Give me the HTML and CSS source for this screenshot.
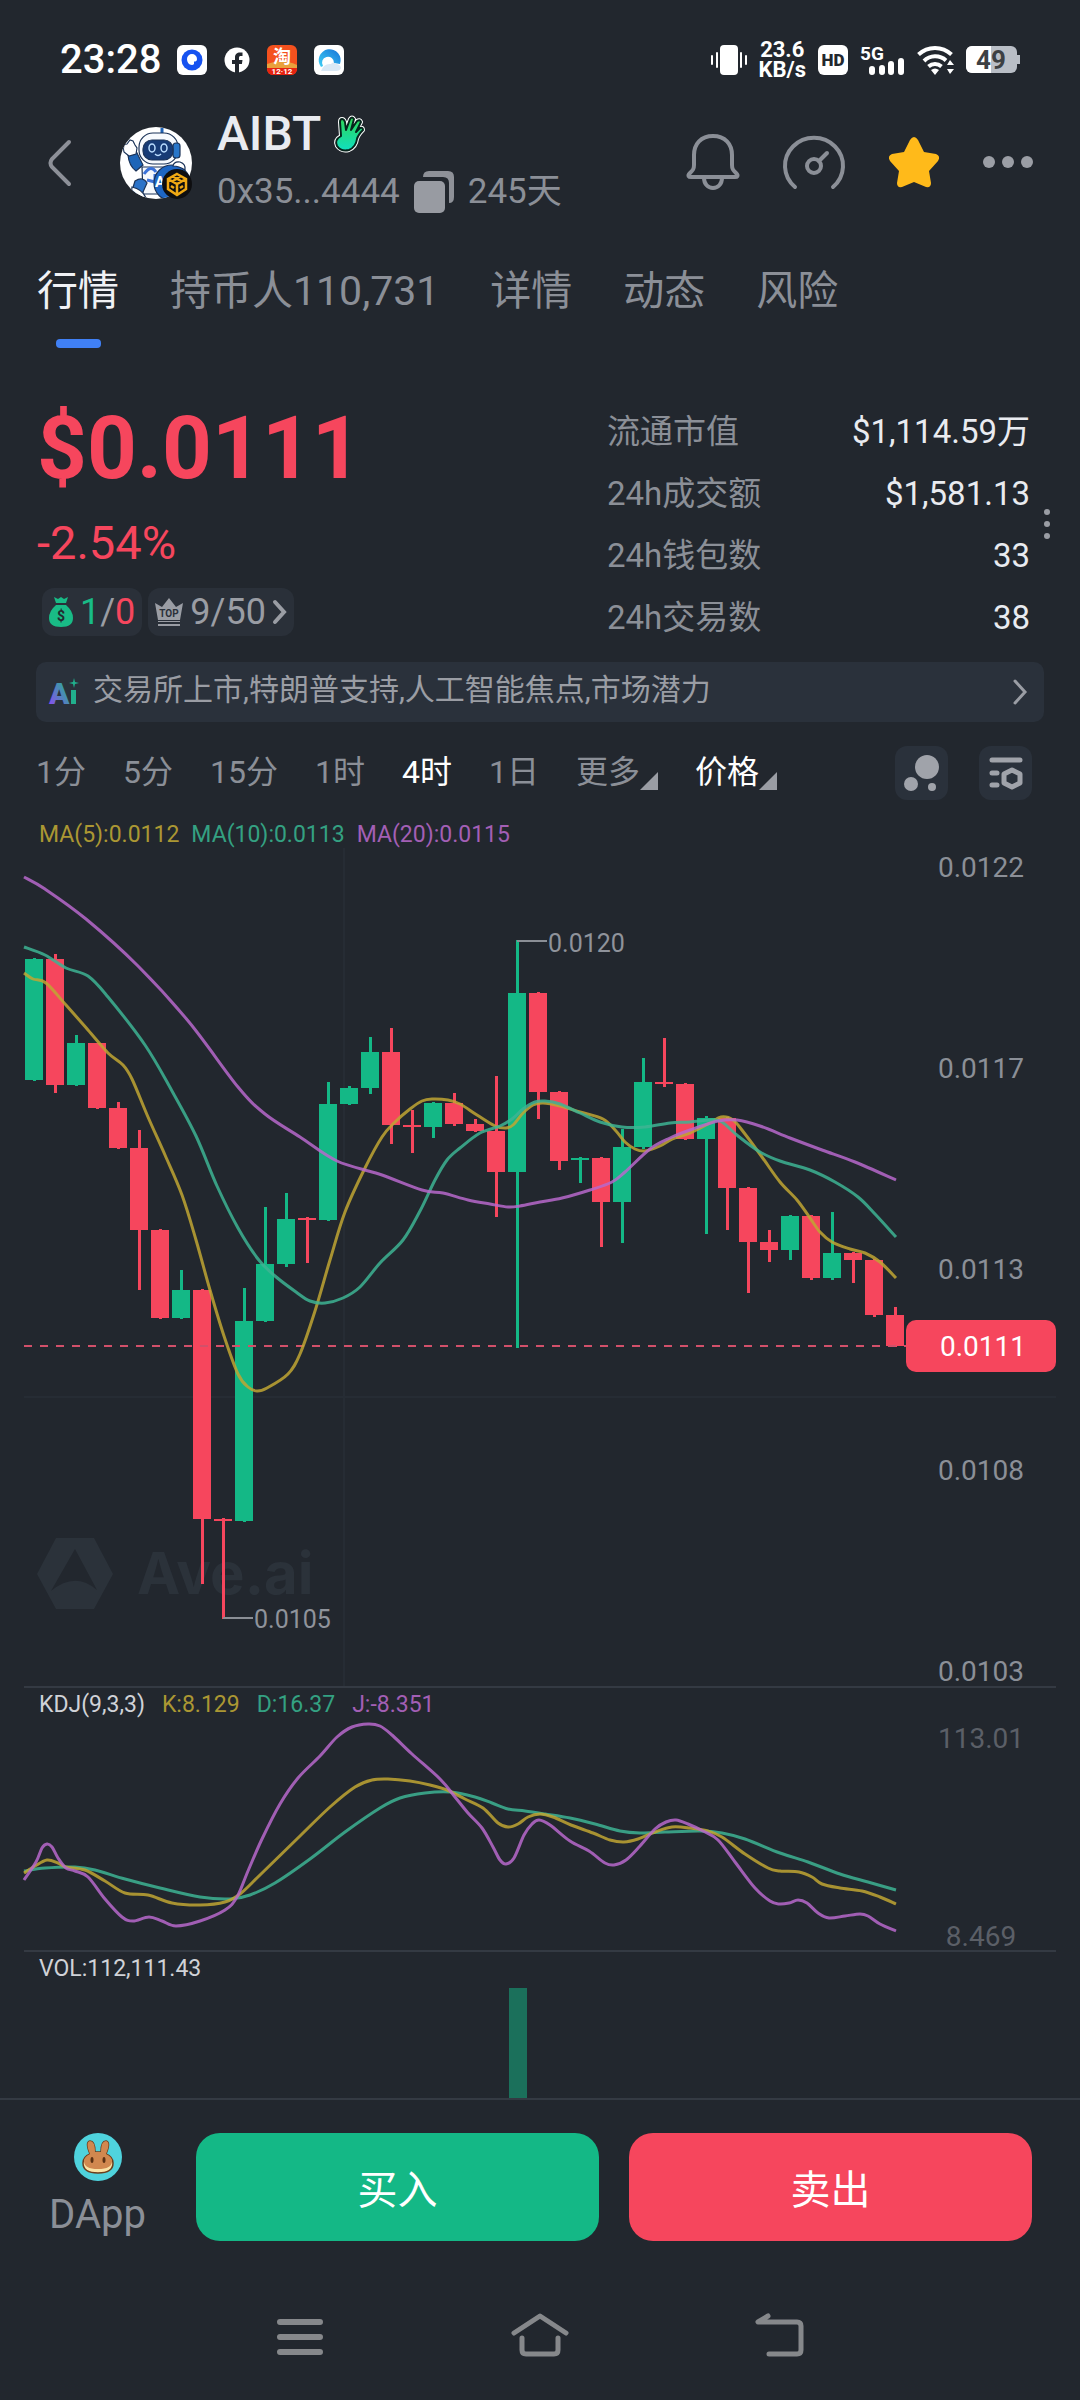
FILE: index.html
```html
<!DOCTYPE html>
<html lang="zh-CN">
<head>
    <meta charset="UTF-8">
    <meta name="viewport" content="width=device-width, initial-scale=1.0">
    <title>AIBT 行情</title>
    <link rel="stylesheet" href="styles.css">
</head>
<body>
    <!-- 状态栏 -->
    <div class="status-bar">
        <span class="clock">23:28</span>
        <div class="app-icons">
            <svg width="30" height="30" viewBox="0 0 30 30">
                <rect width="30" height="30" rx="6" fill="#fff"/>
                <circle cx="15" cy="15" r="10.500" fill="#1652f0"/>
                <path d="M10 14a5 5 0 0 1 10 0c0 2-1 2.500-3 2.500V19a2.500 2.500 0 0 1-2 1c-3 0-5-3-5-6z" fill="#fff"/>
            </svg>
            <svg width="26" height="26" viewBox="0 0 26 26">
                <circle cx="13" cy="13" r="12.500" fill="#fff"/>
                <path d="M11 26v-9H8v-4h3v-2.500C11 7 13 5.500 16 5.500h2.500V9H17c-1.500 0-2 .6-2 2v2h3.500l-.6 4H15v9z" fill="#22272e"/>
            </svg>
            <svg width="30" height="30" viewBox="0 0 30 30">
                <rect width="30" height="30" rx="6" fill="#f4511e"/>
                <path d="M0 19q15-6 30 1v5H0z" fill="#e9a13c"/>
                <path d="M0 23h30v1a6 6 0 0 1-6 6H6a6 6 0 0 1-6-6z" fill="#e62310"/>
                <text x="15" y="18" class="taobao-text">淘</text>
                <text x="15" y="29" class="taobao-date">12·12</text>
            </svg>
            <svg width="30" height="30" viewBox="0 0 30 30">
                <defs>
                    <linearGradient id="browser" x1="0" y1="1" x2="1" y2="0">
                        <stop offset="0" stop-color="#3fd0f5"/>
                        <stop offset="1" stop-color="#1673d8"/>
                    </linearGradient>
                </defs>
                <rect width="30" height="30" rx="6" fill="#fff"/>
                <path d="M7 22A11 11 0 1 1 26 19L20 18a6 6 0 1 0-11 3z" fill="url(#browser)"/>
                <path d="M7 26q3-8 10-7 2-3 5 0 4 0 5 4-1 3-5 3z" fill="#d9e8f5"/>
            </svg>
        </div>

        <svg width="36" height="30" viewBox="0 0 36 30">
            <rect x="9" width="18" height="30" rx="4" fill="#fff"/>
            <path d="M1 11v8M6 8v14M30 8v14M35 11v8" stroke="#fff" stroke-width="2" stroke-linecap="round"/>
        </svg>
        <span class="speed">23.6<br>KB/s</span>
        <svg width="30" height="30" viewBox="0 0 30 30">
            <rect width="30" height="30" rx="6" fill="#fff"/>
            <text x="15" y="21" class="hd-text">HD</text>
        </svg>
        <svg width="45" height="32" viewBox="0 0 45 32">
            <text x="0" y="16" class="net-text">5G</text>
            <path d="M12 25v3M22 24v4M31 20v8M41 17v11" stroke="#fff" stroke-width="6" stroke-linecap="round"/>
        </svg>
        <svg width="37" height="30" viewBox="0 0 37 30">
            <path d="M1.500 9.500a24 24 0 0 1 33 0M7 16a16 16 0 0 1 22-.5M11.500 21.500a10 10 0 0 1 13 0" fill="none" stroke="#fff" stroke-width="4"/>
            <path d="M14 25q4-3 8 0l-4 5zM33 15l4 5h-7zM33 29l4-5h-7z" fill="#fff"/>
        </svg>
        <svg width="54" height="28" viewBox="0 0 54 28">
            <rect width="51" height="27" rx="6" fill="#b9bec6"/>
            <path d="M6 0h19v27H6a6 6 0 0 1-6-6V6a6 6 0 0 1 6-6z" fill="#fff"/>
            <path d="M51 9h3v9h-3z" fill="#b9bec6"/>
            <text x="25" y="23" class="battery-text">49</text>
        </svg>
    </div>

    <!-- 代币信息 -->
    <header class="token-header">
        <button class="icon-btn back" aria-label="返回">
            <svg width="24" height="46" viewBox="0 0 24 46"><path d="M21 2L4 19q-3 4 0 8l17 17" fill="none" stroke="#8d9098" stroke-width="4" stroke-linecap="round"/></svg>
        </button>
        <svg class="avatar" width="74" height="74" viewBox="0 0 74 74">
            <defs><clipPath id="round"><circle cx="37" cy="37" r="36"/></clipPath></defs>
            <circle cx="37" cy="37" r="36" fill="#fff"/>
            <g clip-path="url(#round)" stroke="#1b3358" stroke-width="1.200">
                <path d="M43 2v6" stroke-width="3" stroke="#1f62b5"/>
                <path d="M23 41h32v20l-10 7H24z" fill="#f5f8fc"/>
                <path d="M9 29l8-4 7 14-7 6q-7-5-8-16z" fill="#1d65b8"/>
                <path d="M5 26q-2-8 3-8l3-4 3 1 2 4 2 3-1 6-7 2z" fill="#fff"/>
                <path d="M16 55q8-5 12 2l-4 9-12 2z" fill="#2a72c8"/>
                <path d="M13 61q10 2 14 11H12z" fill="#fff"/>
                <rect x="20" y="7" width="39" height="31" rx="14" fill="#f7fafe"/>
                <rect x="54" y="17" width="7" height="15" rx="3" fill="#2876c9"/>
                <rect x="24" y="14" width="30" height="20" rx="9" fill="#173b76"/>
                <ellipse cx="33" cy="22" rx="3" ry="4" fill="none" stroke="#b9dcff" stroke-width="1.500"/>
                <ellipse cx="45" cy="22" rx="3" ry="4" fill="none" stroke="#b9dcff" stroke-width="1.500"/>
                <path d="M36 28q3 3 6 0" fill="none" stroke="#b9dcff" stroke-width="1.500"/>
                <path d="M25 48q7-10 12-2M28 54l8 2v-8" fill="none" stroke="#3a72d9" stroke-width="3"/>
                <circle cx="53" cy="57" r="18" fill="#1e66c4"/>
                <path d="M54 40q1-5 7-4 6 2 5 8-6-4-12-4z" fill="#fff"/>
            </g>
            <text x="36" y="61" class="avatar-letter">A</text>
            <circle cx="58" cy="58" r="15" fill="#0e0e10"/>
            <path d="M58 48l9 5v10l-9 6-9-6V53zM49 53l9 5 9-5M58 58v11M53 50l9 5M62 50l-8 5M52 60l3 2M64 60l-3 2" fill="none" stroke="#f0a914" stroke-width="2.500"/>
        </svg>
        <div class="token-info">
            <div class="token-name">
                <h1>AIBT</h1>
                <svg width="32" height="36" viewBox="0 0 32 36">
                    <defs>
                        <linearGradient id="hand" x1="0" y1="0" x2="0" y2="1">
                            <stop offset="0" stop-color="#2ed656"/>
                            <stop offset="1" stop-color="#10dfc0"/>
                        </linearGradient>
                    </defs>
                    <path d="M8 20L7 6q0-3 2-3t3 3l1 8 4-11q2-3 4 0l-3 11 6-9q3-2 4 1l-5 10 4-4q3-1 3 2-5 5-6 9-1 8-8 11-8 2-12-4-3-6 4-10z" fill="none" stroke="#fff" stroke-width="4" stroke-linejoin="round"/>
                    <path d="M8 20L7 6q0-3 2-3t3 3l1 8 4-11q2-3 4 0l-3 11 6-9q3-2 4 1l-5 10 4-4q3-1 3 2-5 5-6 9-1 8-8 11-8 2-12-4-3-6 4-10z" fill="url(#hand)" stroke="#06251c" stroke-width="2" stroke-linejoin="round"/>
                </svg>
            </div>
            <div class="token-sub">
                <span>0x35...4444</span>
                <button class="icon-btn" aria-label="复制">
                    <svg width="40" height="42" viewBox="0 0 40 42">
                        <path d="M9 6q0-6 6-6h19q6 0 6 6v20q0 6-5 6V12q0-6-6-6z" fill="#8e9198"/>
                        <rect y="10" width="31" height="32" rx="5" fill="#989ba2"/>
                    </svg>
                </button>
                <span>245天</span>
            </div>
        </div>
        <div class="header-actions">
            <button class="icon-btn" aria-label="提醒">
                <svg width="54" height="56" viewBox="0 0 54 56" fill="none" stroke="#8b8f97" stroke-width="4" stroke-linejoin="round">
                    <path d="M27 2c12 0 19 8 19 19v10c0 4 1 5 4 8s1 4-1 4H5c-2 0-4-1-1-4s4-4 4-8V21C8 10 15 2 27 2z"/>
                    <path d="M18 44c0 6 4 10 9 10s9-4 9-10"/>
                </svg>
            </button>
            <button class="icon-btn" aria-label="检测">
                <svg width="62" height="56" viewBox="0 0 62 56" fill="none" stroke="#8b8f97" stroke-width="4" stroke-linecap="round">
                    <path d="M12 53a29 28 0 1 1 38 0"/>
                    <circle cx="31" cy="32" r="7"/>
                    <path d="M36 27l8-8"/>
                </svg>
            </button>
            <button class="icon-btn" aria-label="收藏">
                <svg width="52" height="52" viewBox="0 0 52 52"><path d="M22 4q4-6 8 0l6 12 12 2q5 2 2 7l-9 10 2 12q0 5-5 4l-12-5-12 5q-5 1-5-4l2-12L2 25q-3-5 2-7l12-2z" fill="#ffba1a"/></svg>
            </button>
            <button class="icon-btn" aria-label="更多">
                <svg width="50" height="12" viewBox="0 0 50 12" fill="#9b9ea5"><circle cx="6" cy="6" r="6"/><circle cx="25" cy="6" r="6"/><circle cx="44" cy="6" r="6"/></svg>
            </button>
        </div>
    </header>

    <nav class="tabs">
        <a href="#" class="active">行情</a>
        <a href="#">持币人110,731</a>
        <a href="#">详情</a>
        <a href="#">动态</a>
        <a href="#">风险</a>
    </nav>

    <!-- 价格 -->
    <section class="quote">
        <div class="quote-left">
            <div class="price">$0.0111</div>
            <div class="change">-2.54%</div>
            <div class="tags">
                <button class="tag">
                    <svg width="24" height="30" viewBox="0 0 24 30">
                        <path d="M5 0l4 2 3-2 3 2 4-2-2 6H7zM7 8h10q7 6 7 13 0 9-12 9T0 21q0-7 7-13z" fill="#19bb86"/>
                        <text x="12" y="24" class="bag-text">$</text>
                    </svg>
                    <span><span class="up">1</span>/<span class="down">0</span></span>
                </button>
                <button class="tag">
                    <svg width="28" height="28" viewBox="0 0 28 28">
                        <path d="M0 5l7 4 7-9 7 9 7-4-3 17H3zM3 23h22v1H3zM3 26h22v2H3z" fill="#9a9da4"/>
                        <text x="14" y="19" class="top-text">TOP</text>
                    </svg>
                    <span>9/50</span>
                    <svg width="14" height="24" viewBox="0 0 14 24"><path d="M2 2l9 10-9 10" fill="none" stroke="#9a9da4" stroke-width="4" stroke-linecap="round"/></svg>
                </button>
            </div>
        </div>
        <dl class="stats">
            <div><dt>流通市值</dt><dd>$1,114.59万</dd></div>
            <div><dt>24h成交额</dt><dd>$1,581.13</dd></div>
            <div><dt>24h钱包数</dt><dd>33</dd></div>
            <div><dt>24h交易数</dt><dd>38</dd></div>
        </dl>
        <svg class="grip" width="6" height="30" viewBox="0 0 6 30" fill="#9a9da4"><circle cx="3" cy="3" r="3"/><circle cx="3" cy="15" r="3"/><circle cx="3" cy="27" r="3"/></svg>
    </section>

    <a href="#" class="ai-bar">
        <svg width="30" height="28" viewBox="0 0 30 28">
            <defs>
                <linearGradient id="ai" x1="0" y1="1" x2="1" y2="0">
                    <stop offset="0.100" stop-color="#8a4df0"/>
                    <stop offset="0.900" stop-color="#1fb58c"/>
                </linearGradient>
            </defs>
            <text x="0" y="26" class="ai-text" fill="url(#ai)">A</text>
            <rect x="22" y="12" width="5" height="14" fill="#21b08d"/>
            <path d="M25 0l1 4 4 1-4 1-1 4-1-4-4-1 4-1z" fill="#21b08d"/>
        </svg>
        <span class="ai-desc">交易所上市,特朗普支持,人工智能焦点,市场潜力</span>
        <svg width="16" height="26" viewBox="0 0 16 26"><path d="M3 2l10 11L3 24" fill="none" stroke="#9a9da4" stroke-width="3" stroke-linecap="round"/></svg>
    </a>

    <!-- 周期 -->
    <div class="intervals">
        <button>1分</button>
        <button>5分</button>
        <button>15分</button>
        <button>1时</button>
        <button class="active">4时</button>
        <button>1日</button>
        <button class="menu">更多</button>
        <button class="menu active">价格</button>
        <div class="chart-tools">
            <button class="square" aria-label="气泡图">
                <svg width="36" height="36" viewBox="0 0 36 36" fill="#a0a3aa"><circle cx="23" cy="12" r="12"/><circle cx="7" cy="29" r="7"/><circle cx="28" cy="32" r="4"/></svg>
            </button>
            <button class="square" aria-label="指标设置">
                <svg width="34" height="32" viewBox="0 0 34 32">
                    <path d="M3 3h28M3 16h5M3 28h5" stroke="#a0a3aa" stroke-width="5" stroke-linecap="round"/>
                    <path d="M23 13l8 4v9l-8 4-8-4v-9z" fill="none" stroke="#a0a3aa" stroke-width="5" stroke-linejoin="round"/>
                </svg>
            </button>
        </div>
    </div>

    <!-- K线图 -->
    <main class="charts">
        <section class="pane">
            <div class="legend ma"><span class="c1">MA(5):0.0112</span><span class="c2">MA(10):0.0113</span><span class="c3">MA(20):0.0115</span></div>
            <svg viewBox="24 848 1032 838">
                <path d="M344 848V1686M24 1397H1056" class="grid"/>
                <path d="M56 1538h38l19 36-19 35H56l-19-35zM75 1549l-24 42q24-20 46-1z" fill="#2b323a" fill-rule="evenodd"/>
                <text x="137" y="1594" class="watermark">Ave.ai</text>
                <g id="candles"></g>
                <path d="M24 1346H907" class="last-line"/>
                <g id="ma"></g>
                <path d="M517 941h30M223 1618h30" stroke="#8a8e95" stroke-width="2"/>
                <text x="548" y="952" class="mark">0.0120</text>
                <text x="254" y="1628" class="mark">0.0105</text>
                <g class="axis">
                    <text x="981" y="877">0.0122</text>
                    <text x="981" y="1078">0.0117</text>
                    <text x="981" y="1279">0.0113</text>
                    <text x="981" y="1480">0.0108</text>
                    <text x="981" y="1681">0.0103</text>
                </g>
                <rect x="906" y="1320" width="150" height="52" rx="10" fill="#f6465d"/>
                <text x="983" y="1356" class="last-price">0.0111</text>
            </svg>
        </section>
        <section class="pane">
            <div class="legend"><span>KDJ(9,3,3)</span><span class="c1">K:8.129</span><span class="c2">D:16.37</span><span class="c3">J:-8.351</span></div>
            <svg viewBox="24 1720 1032 230">
                <g id="kdj"></g>
                <g class="axis dim">
                    <text x="981" y="1748">113.01</text>
                    <text x="981" y="1946">8.469</text>
                </g>
            </svg>
        </section>
        <section class="pane volume">
            <div class="legend"><span>VOL:112,111.43</span></div>
            <svg viewBox="24 1984 1032 114">
                <rect x="509" y="1988" width="18" height="110" fill="#1b705b"/>
            </svg>
        </section>
    </main>

    <footer class="trade-bar">
        <a href="#" class="dapp">
            <svg width="48" height="48" viewBox="0 0 48 48">
                <circle cx="24" cy="24" r="24" fill="#4fd3dd"/>
                <path d="M16 21q-5-12 0-13 5 0 5 11h6q0-11 5-11 5 1 0 13 7 3 7 9 0 10-15 10T9 30q0-6 7-9z" fill="#fbe3a5" stroke="#6b3d1c" stroke-width="1.500"/>
                <path d="M16 21q-5-12 0-13 5 0 5 11h6q0-11 5-11 5 1 0 13 6 3 6 7 0 8-14 8T10 28q0-4 6-7z" fill="#d1884f"/>
                <ellipse cx="18" cy="27" rx="1.500" ry="3" fill="#5b3113"/>
                <ellipse cx="30" cy="27" rx="1.500" ry="3" fill="#5b3113"/>
            </svg>
            <span>DApp</span>
        </a>
        <button class="buy">买入</button>
        <button class="sell">卖出</button>
    </footer>

    <div class="system-nav">
        <button class="icon-btn" aria-label="最近任务">
            <svg width="58" height="48" viewBox="0 0 58 48"><path d="M9 9h40M9 24h40M9 39h40" stroke="#86888b" stroke-width="6" stroke-linecap="round"/></svg>
        </button>
        <button class="icon-btn" aria-label="主页">
            <svg width="58" height="48" viewBox="0 0 58 48" fill="none" stroke="#86888b" stroke-width="5" stroke-linecap="round" stroke-linejoin="round"><path d="M3 20L29 3l26 17M11 25v12q0 4 4 4h28q4 0 4-4V25"/></svg>
        </button>
        <button class="icon-btn" aria-label="返回上一页">
            <svg width="58" height="48" viewBox="0 0 58 48" fill="none" stroke="#86888b" stroke-width="5" stroke-linecap="round" stroke-linejoin="round"><path d="M17 3L7 9h39q4 0 4 4v24q0 4-4 4H18"/></svg>
        </button>
    </div>

    <script src="chart.js"></script>
</body>
</html>
```

FILE: styles.css
```css
* {
    box-sizing: border-box;
}

body {
    margin: 0;
    background-color: #22272e;
    color: #e9ebf0;
    font-family: Roboto, "Noto Sans CJK SC", sans-serif;
    font-size: 32px;
}

svg {
    display: block;
    flex-shrink: 0;
    overflow: visible;
}

button {
    margin: 0;
    padding: 0;
    border: none;
    background: none;
    color: inherit;
    font: inherit;
    cursor: pointer;
}

a {
    color: inherit;
    text-decoration: none;
}

text {
    font-family: Roboto, "Noto Sans CJK SC", sans-serif;
}

/* 状态栏 */
.status-bar {
    display: flex;
    align-items: center;
    gap: 12px;
    height: 80px;
    padding: 40px 60px 0;
    color: #fff;
}

.clock {
    font-size: 40px;
    font-weight: 500;
    line-height: 40px;
}

.app-icons {
    display: flex;
    align-items: center;
    gap: 17px;
    margin: 0 auto 0 4px;
}

.speed {
    font-size: 22px;
    font-weight: 700;
    line-height: 20px;
    text-align: center;
}

.taobao-text {
    font-size: 18px;
    font-weight: 700;
    fill: #fff;
    text-anchor: middle;
}

.taobao-date {
    font-size: 8px;
    font-weight: 700;
    fill: #fff;
    text-anchor: middle;
}

.hd-text {
    font-size: 17px;
    font-weight: 900;
    fill: #22272e;
    text-anchor: middle;
}

.net-text {
    font-size: 19px;
    font-weight: 700;
    fill: #fff;
}

.battery-text {
    font-size: 26px;
    font-weight: 700;
    fill: #3d4043;
    text-anchor: middle;
}

/* 头部 */
.token-header {
    display: flex;
    align-items: center;
    padding: 28px 48px 0;
}

.icon-btn {
    display: flex;
    align-items: center;
    justify-content: center;
}

.avatar {
    margin: 0 24px 0 47px;
}

.avatar-letter {
    font-size: 15px;
    font-weight: 700;
    fill: #fff;
}

.token-name {
    display: flex;
    align-items: center;
    gap: 12px;
    height: 52px;
}

.token-name h1 {
    margin: 0;
    font-size: 48px;
    font-weight: 500;
    line-height: 52px;
}

.token-sub {
    display: flex;
    align-items: center;
    gap: 14px;
    height: 52px;
    margin-top: 6px;
    color: #8b8f97;
    font-size: 35px;
    line-height: 52px;
}

.header-actions {
    display: flex;
    align-items: center;
    gap: 43px;
    margin: -2px -1px 0 auto;
}

/* 标签 */
.tabs {
    display: flex;
    gap: 51px;
    padding: 45px 37px 0;
    color: #8b8f97;
    font-size: 41px;
    line-height: 56px;
}

.tabs a::after {
    content: "";
    display: block;
    width: 45px;
    height: 9px;
    margin: 20px auto 0;
    border-radius: 4px;
}

.tabs .active {
    color: #f0f1f5;
}

.tabs .active::after {
    background-color: #4080f5;
}

/* 价格 */
.quote {
    display: flex;
    align-items: center;
    padding: 53px 30px 0 37px;
}

.quote-left {
    flex: 1;
    padding-bottom: 12px;
}

.price {
    color: #f6465d;
    font-size: 87px;
    font-weight: 700;
    line-height: 92px;
}

.change {
    margin-top: 20px;
    color: #f6465d;
    font-size: 47px;
    line-height: 58px;
}

.tags {
    display: flex;
    gap: 6px;
    margin-top: 16px;
    padding-left: 5px;
}

.tag {
    display: flex;
    align-items: center;
    gap: 7px;
    height: 48px;
    padding: 0 7px;
    border-radius: 12px;
    background-color: #2a3039;
    color: #9a9da4;
    font-size: 36px;
}

.up {
    color: #19bb86;
}

.down {
    color: #f6465d;
}

.bag-text {
    font-size: 14px;
    font-weight: 700;
    fill: #22272e;
    text-anchor: middle;
}

.top-text {
    font-size: 10px;
    font-weight: 700;
    fill: #2a3039;
    text-anchor: middle;
}

.stats {
    width: 423px;
    margin: 0;
}

.stats div {
    display: flex;
    justify-content: space-between;
    font-size: 33px;
    line-height: 62px;
}

.stats dt {
    color: #8b8f97;
}

.stats dd {
    margin: 0;
}

.grip {
    margin: 0 0 2px 14px;
}

/* AI 简介 */
.ai-bar {
    display: flex;
    align-items: center;
    gap: 14px;
    height: 60px;
    margin: 13px 36px 0;
    padding: 0 16px 0 13px;
    border-radius: 10px;
    background-color: #2a313b;
    color: #9a9da4;
}

.ai-desc {
    flex: 1;
    font-size: 30px;
    line-height: 56px;
    padding-bottom: 4px;
}

.ai-text {
    font-size: 30px;
    font-weight: 900;
}

/* 周期 */
.intervals {
    display: flex;
    align-items: center;
    gap: 37px;
    height: 54px;
    margin-top: 24px;
    padding: 0 48px 0 36px;
    color: #8b8f97;
    line-height: 50px;
}

.intervals > button {
    padding-bottom: 2px;
}

.intervals .active {
    color: #fff;
}

.menu {
    display: flex;
    align-items: flex-end;
}

.menu::after {
    content: "";
    width: 18px;
    height: 18px;
    margin-bottom: 7px;
    background-color: #9a9da4;
    clip-path: polygon(100% 0, 100% 100%, 0 100%);
}

.chart-tools {
    display: flex;
    gap: 31px;
    margin-left: auto;
}

.square {
    display: flex;
    align-items: center;
    justify-content: center;
    width: 53px;
    height: 54px;
    border-radius: 12px;
    background-color: #2a313b;
}

/* 图表 */
.charts {
    padding: 20px 24px 0;
}

.pane {
    border-bottom: 2px solid #343a43;
}

.pane.volume {
    border-bottom: none;
}

.pane svg {
    width: 100%;
    height: auto;
}

.legend {
    display: flex;
    gap: 17px;
    padding: 2px 0 0 15px;
    font-size: 23px;
    line-height: 30px;
    color: #d0d2d7;
}

.legend.ma {
    gap: 12px;
    line-height: 26px;
}

.c1 {
    color: #ab9733;
}

.c2 {
    color: #34a182;
}

.c3 {
    color: #a35fb5;
}

.grid {
    stroke: #262c34;
    stroke-width: 2;
}

.watermark {
    font-family: Inter, sans-serif;
    font-size: 58px;
    font-weight: 700;
    fill: #2b323a;
}

.candle-up {
    fill: #14b886;
    stroke: #14b886;
}

.candle-down {
    fill: #f6465d;
    stroke: #f6465d;
}

.last-line {
    stroke: #d2506a;
    stroke-width: 2;
    stroke-dasharray: 8 8;
}

.curve {
    fill: none;
    stroke-width: 3;
    opacity: 0.85;
}

.k1 {
    stroke: #bfa632;
}

.k2 {
    stroke: #3db493;
}

.k3 {
    stroke: #b768cb;
}

.mark {
    font-size: 25px;
    fill: #8f939b;
}

.axis text {
    font-size: 28px;
    fill: #8b8f97;
    text-anchor: middle;
}

.axis.dim text {
    fill: #5b5f67;
}

.last-price {
    font-size: 28px;
    fill: #fff;
    text-anchor: middle;
}

/* 底部交易 */
.trade-bar {
    display: flex;
    gap: 30px;
    padding: 33px 48px 0 49px;
    border-top: 2px solid #343a43;
}

.dapp {
    display: flex;
    flex-direction: column;
    align-items: center;
    gap: 10px;
    width: 97px;
    margin-right: 20px;
    color: #8b8f97;
    font-size: 40px;
    line-height: 48px;
}

.buy,
.sell {
    flex: 1;
    height: 108px;
    border-radius: 24px;
    color: #fff;
    font-size: 40px;
}

.buy {
    background-color: #14b886;
}

.sell {
    background-color: #f6465d;
}

/* 系统导航 */
.system-nav {
    display: flex;
    justify-content: center;
    gap: 182px;
    padding: 72px 0 36px;
}
```

FILE: chart.js
```js
// [方向, 实体顶, 实体底, 最高, 最低]
const candles = [
    [1, 959, 1080, 958, 1081], [0, 959, 1085, 954, 1093], [1, 1043, 1085, 1035, 1086],
    [0, 1043, 1108, 1043, 1109], [0, 1108, 1148, 1102, 1149], [0, 1148, 1230, 1130, 1290],
    [0, 1230, 1318, 1229, 1319], [1, 1290, 1318, 1270, 1319], [0, 1290, 1519, 1289, 1584],
    [0, 1519, 1521, 1518, 1619], [1, 1321, 1521, 1288, 1522], [1, 1264, 1321, 1207, 1322],
    [1, 1219, 1264, 1193, 1267], [0, 1218, 1220, 1217, 1263], [1, 1104, 1220, 1082, 1221],
    [1, 1088, 1104, 1086, 1105], [1, 1052, 1088, 1037, 1094], [0, 1052, 1125, 1028, 1144],
    [0, 1125, 1127, 1110, 1153], [1, 1103, 1127, 1102, 1138], [0, 1103, 1124, 1093, 1126],
    [0, 1124, 1131, 1119, 1132], [0, 1131, 1172, 1076, 1217], [1, 993, 1172, 940, 1348],
    [0, 993, 1092, 992, 1119], [0, 1092, 1161, 1091, 1170], [1, 1158, 1160, 1157, 1183],
    [0, 1158, 1202, 1157, 1247], [1, 1147, 1202, 1129, 1243], [1, 1082, 1147, 1058, 1149],
    [0, 1082, 1084, 1038, 1087], [0, 1084, 1139, 1083, 1140], [1, 1118, 1139, 1116, 1234],
    [0, 1118, 1188, 1117, 1230], [0, 1188, 1242, 1187, 1293], [0, 1242, 1250, 1230, 1262],
    [1, 1216, 1250, 1215, 1260], [0, 1216, 1278, 1215, 1280], [1, 1253, 1278, 1212, 1280],
    [0, 1253, 1260, 1252, 1283], [0, 1260, 1315, 1259, 1317], [0, 1315, 1346, 1307, 1347]
];

const ma5 = [[24, 973], [33, 979], [46, 983], [66, 1005], [88, 1030], [108, 1053], [123, 1065], [132, 1079], [148, 1117], [165, 1155], [182, 1195], [196, 1240], [210, 1290], [224, 1336], [238, 1374], [248, 1387], [257, 1391], [267, 1388], [288, 1374], [300, 1354], [315, 1311], [330, 1260], [345, 1212], [365, 1168], [382, 1137], [395, 1122], [410, 1109], [422, 1101], [432, 1099], [448, 1100], [460, 1104], [477, 1115], [495, 1126], [506, 1128], [513, 1125], [523, 1113], [533, 1105], [543, 1103], [560, 1106], [580, 1112], [603, 1119], [616, 1131], [625, 1142], [635, 1149], [645, 1151], [660, 1146], [672, 1139], [690, 1133], [710, 1123], [721, 1117], [733, 1120], [745, 1134], [762, 1157], [780, 1182], [797, 1200], [810, 1218], [820, 1232], [832, 1242], [850, 1249], [865, 1253], [880, 1262], [896, 1278]];

const ma10 = [[24, 947], [45, 955], [66, 968], [88, 976], [108, 997], [145, 1045], [172, 1091], [196, 1136], [217, 1186], [238, 1228], [258, 1259], [275, 1276], [296, 1292], [310, 1301], [325, 1303], [343, 1298], [360, 1287], [380, 1263], [403, 1240], [420, 1211], [435, 1180], [447, 1160], [460, 1148], [480, 1133], [500, 1126], [512, 1119], [523, 1109], [535, 1102], [545, 1101], [560, 1104], [580, 1113], [600, 1122], [622, 1127], [645, 1127], [670, 1123], [690, 1122], [712, 1120], [722, 1122], [738, 1136], [760, 1152], [780, 1161], [810, 1170], [835, 1182], [858, 1197], [875, 1214], [896, 1237]];

const ma20 = [[24, 877], [45, 889], [86, 919], [138, 966], [189, 1022], [238, 1087], [265, 1114], [300, 1137], [337, 1161], [379, 1174], [422, 1190], [443, 1193], [468, 1200], [490, 1204], [508, 1207], [520, 1206], [540, 1202], [562, 1198], [590, 1190], [612, 1182], [625, 1172], [650, 1149], [670, 1138], [690, 1130], [718, 1121], [737, 1120], [760, 1126], [790, 1138], [822, 1150], [855, 1162], [896, 1180]];

const k = [[24, 1873], [35, 1866], [47, 1860], [58, 1863], [66, 1867], [85, 1870], [105, 1881], [125, 1893], [148, 1895], [172, 1903], [200, 1905], [225, 1902], [240, 1894], [260, 1875], [300, 1836], [330, 1807], [355, 1787], [372, 1780], [388, 1779], [410, 1781], [430, 1785], [447, 1790], [465, 1799], [483, 1808], [498, 1823], [508, 1827], [518, 1824], [528, 1817], [540, 1814], [553, 1817], [571, 1825], [593, 1833], [610, 1840], [624, 1842], [638, 1839], [655, 1832], [672, 1827], [690, 1828], [708, 1831], [722, 1837], [745, 1854], [768, 1868], [780, 1871], [799, 1872], [812, 1877], [822, 1884], [840, 1888], [862, 1891], [880, 1897], [896, 1904]];

const d = [[24, 1871], [45, 1868], [75, 1867], [95, 1870], [125, 1879], [160, 1888], [200, 1897], [230, 1899], [250, 1895], [275, 1883], [310, 1859], [345, 1832], [380, 1808], [400, 1798], [425, 1793], [450, 1792], [475, 1797], [492, 1803], [508, 1809], [525, 1811], [545, 1814], [570, 1818], [595, 1824], [620, 1831], [640, 1833], [665, 1832], [700, 1831], [722, 1833], [745, 1839], [780, 1853], [808, 1862], [840, 1874], [868, 1882], [896, 1890]];

const j = [[24, 1880], [36, 1862], [42, 1848], [47, 1844], [52, 1847], [58, 1858], [66, 1868], [75, 1871], [88, 1877], [105, 1899], [122, 1917], [133, 1921], [149, 1917], [162, 1921], [176, 1926], [200, 1921], [225, 1910], [237, 1897], [248, 1871], [262, 1839], [280, 1804], [298, 1778], [320, 1756], [337, 1737], [352, 1727], [368, 1724], [380, 1726], [392, 1735], [412, 1754], [440, 1779], [455, 1797], [468, 1813], [482, 1828], [493, 1847], [500, 1860], [506, 1864], [514, 1858], [524, 1835], [532, 1824], [539, 1820], [550, 1825], [570, 1841], [589, 1851], [605, 1863], [614, 1865], [626, 1860], [640, 1846], [655, 1829], [666, 1822], [676, 1820], [688, 1824], [703, 1831], [718, 1840], [735, 1862], [755, 1888], [770, 1901], [779, 1904], [789, 1903], [798, 1900], [807, 1903], [818, 1913], [829, 1918], [845, 1916], [860, 1914], [868, 1916], [880, 1924], [896, 1931]];

// 平滑曲线
function smooth(points) {
    let path = `M${points[0]}`;
    for (let i = 0; i < points.length - 1; i++) {
        const p0 = points[i - 1] || points[i];
        const p1 = points[i];
        const p2 = points[i + 1];
        const p3 = points[i + 2] || p2;
        path += `C${p1[0] + (p2[0] - p0[0]) / 6} ${p1[1] + (p2[1] - p0[1]) / 6} ` +
            `${p2[0] - (p3[0] - p1[0]) / 6} ${p2[1] - (p3[1] - p1[1]) / 6} ${p2[0]} ${p2[1]}`;
    }
    return path;
}

function drawCurves(id, list) {
    document.getElementById(id).innerHTML = list
        .map(([name, points]) => `<path class="curve ${name}" d="${smooth(points)}"/>`)
        .join('');
}

document.getElementById('candles').innerHTML = candles.map(([up, top, bottom, high, low], i) => {
    const x = 34 + i * 21;
    return `<g class="${up ? 'candle-up' : 'candle-down'}">` +
        `<path d="M${x + 0.5} ${high}V${low}" stroke-width="3"/>` +
        `<rect x="${x - 9}" y="${top}" width="18" height="${bottom - top}" stroke="none"/></g>`;
}).join('');

drawCurves('ma', [['k1', ma5], ['k2', ma10], ['k3', ma20]]);
drawCurves('kdj', [['k2', d], ['k1', k], ['k3', j]]);
```
